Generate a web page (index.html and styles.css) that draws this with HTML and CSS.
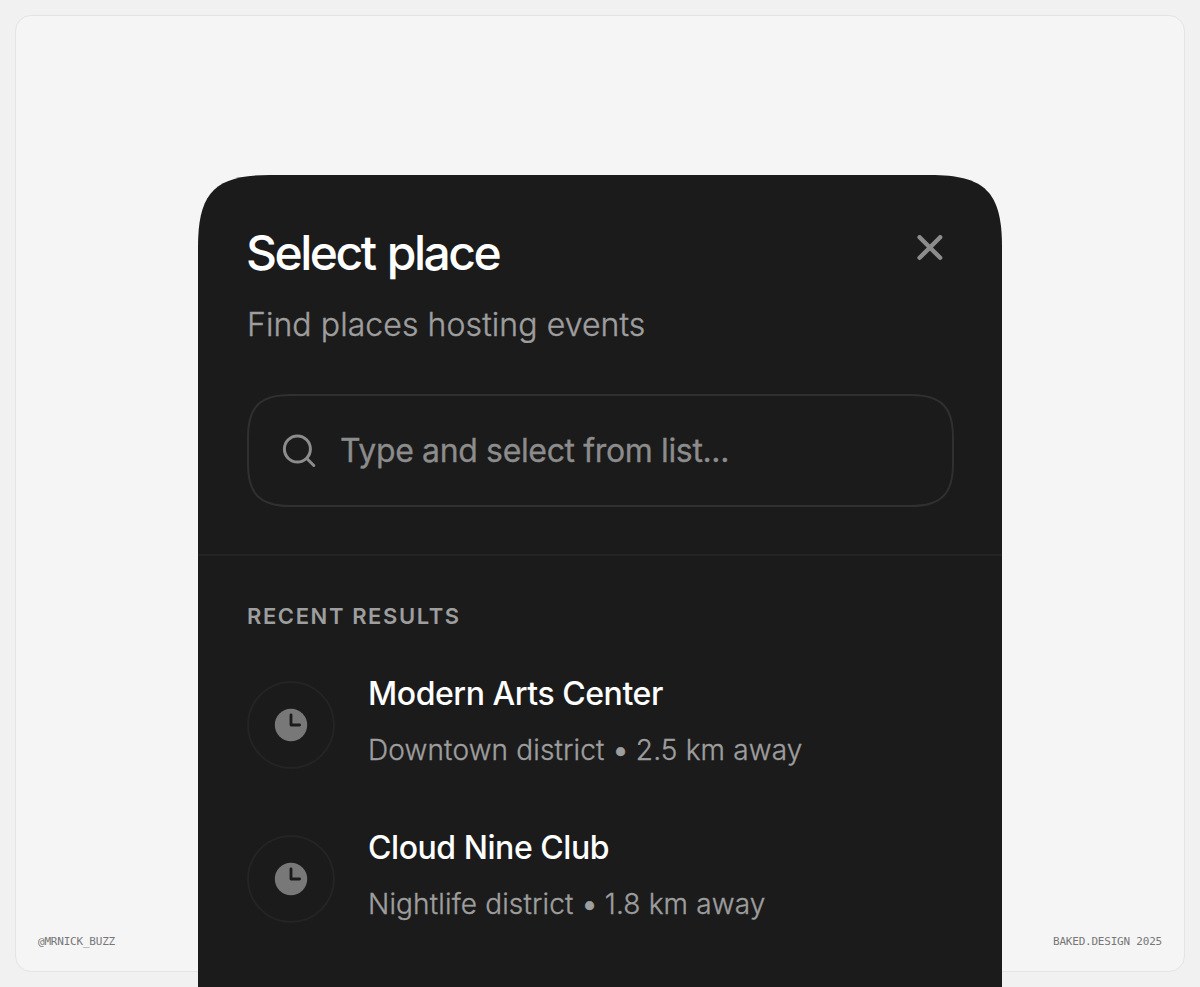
FILE: index.html
```
<!DOCTYPE html>
<html lang="en">
<head>
    <meta charset="utf-8">
    <meta name="viewport" content="width=device-width, initial-scale=1">
    <title>Select place</title>
    <link rel="stylesheet" href="styles.css">
</head>
<body>
    <div class="frame">
        <span class="credit">@MRNICK_BUZZ</span>
        <span class="credit">BAKED.DESIGN 2025</span>
    </div>

    <main class="sheet">
        <header class="sheet-header">
            <div class="sheet-heading">
                <div>
                    <h1>Select place</h1>
                    <p class="subtitle">Find places hosting events</p>
                </div>
                <button class="close" aria-label="Close">
                    <svg width="26" height="26" viewBox="0 0 26 26"><path d="M2.6 2.2l20.6 20.6M23.2 2.2L2.6 22.8"/></svg>
                </button>
            </div>

            <label class="search">
                <svg class="search-outline" width="707" height="113" viewBox="0 0 707 113">
                    <path d="M1 43C1 13 13 1 43 1H664C694 1 706 13 706 43V70C706 100 694 112 664 112H43C13 112 1 100 1 70z"/>
                </svg>
                <svg class="search-icon" width="34" height="34" viewBox="0 0 34 34"><circle cx="15.4" cy="15" r="13"/><path d="M24.8 24.5l7 7"/></svg>
                <input type="text" placeholder="Type and select from list...">
            </label>
        </header>

        <section class="results">
            <h2>RECENT RESULTS</h2>
            <div class="place">
                <div class="place-icon">
                    <svg width="34" height="34" viewBox="0 0 34 34"><circle cx="17" cy="17" r="16.2"/><path d="M17 6.8V17h8.6"/></svg>
                </div>
                <div class="place-text">
                    <h3>Modern Arts Center</h3>
                    <p class="meta">Downtown district <span class="dot">•</span> 2.5 km away</p>
                </div>
            </div>
            <div class="place">
                <div class="place-icon">
                    <svg width="34" height="34" viewBox="0 0 34 34"><circle cx="17" cy="17" r="16.2"/><path d="M17 6.8V17h8.6"/></svg>
                </div>
                <div class="place-text">
                    <h3>Cloud Nine Club</h3>
                    <p class="meta">Nightlife district <span class="dot">•</span> 1.8 km away</p>
                </div>
            </div>
        </section>
    </main>
</body>
</html>
```
FILE: styles.css
```
* { box-sizing: border-box; }
body { margin: 0; height: 987px; overflow: hidden; display: grid; background: #f1f1f1; font-family: Inter, sans-serif; }
h1, h2, h3, p { margin: 0; }
svg { display: block; fill: none; stroke-linecap: round; stroke-linejoin: round; }

/* frame and sheet share one grid cell, the sheet runs off the bottom */
.frame, .sheet { grid-area: 1 / 1; }
.frame { margin: 15px; border: 1px solid #e4e4e4; border-radius: 16px; background: #f5f5f5; display: flex; justify-content: space-between; align-items: flex-end; padding: 0 22px 22px; }
.credit { font: 11px/14px "DejaVu Sans Mono", monospace; letter-spacing: -0.21px; color: #777; }

.sheet {
    width: 804px;
    height: 812px;
    margin: 175px auto 0;
    background: #1b1b1b;
    clip-path: path("M0 72C0 17 17 0 72 0H732C787 0 804 17 804 72V812H0z");
}
.sheet-header { height: 381px; padding: 49px 49px 0; border-bottom: 2px solid #242424; }
.sheet-heading { display: flex; justify-content: space-between; height: 170px; }
h1 { margin-left: -1px; font-size: 48px; line-height: 58px; font-weight: 500; letter-spacing: -2.5px; word-spacing: 2px; color: #fff; }
.subtitle { margin-top: 23px; font-size: 32px; line-height: 40px; font-weight: 300; letter-spacing: 0.08px; color: #9e9e9e; -webkit-text-stroke: 0.4px #9e9e9e; }
.close { align-self: flex-start; margin: 11px 10px 0 0; padding: 0; border: 0; background: none; }
.close svg { stroke: #8c8c8c; stroke-width: 4.4; }

.search { position: relative; display: flex; align-items: center; gap: 24px; width: 707px; height: 113px; padding-left: 35px; }
.search-outline { position: absolute; top: 0; left: 0; stroke: #303030; stroke-width: 2; }
.search-icon { stroke: #8c8c8c; stroke-width: 3; }
.search input { flex: 1; height: 50px; padding: 0; border: 0; outline: 0; background: none; font: 400 32px/50px Inter, sans-serif; letter-spacing: -0.36px; color: #fff; }
.search input::placeholder { color: #8c8c8c; opacity: 1; -webkit-text-stroke: 0.3px #8c8c8c; }

.results { padding: 46px 49px 0; }
h2 { font-size: 22px; line-height: 28px; font-weight: 600; letter-spacing: 1.6px; color: #9e9e9e; }
.place { display: flex; align-items: center; gap: 33px; height: 154px; }
h2 + .place { margin-top: 18px; }
.place-icon { width: 88px; height: 88px; display: flex; align-items: center; justify-content: center; border: 2px solid #242424; border-radius: 50%; }
.place-icon circle { fill: #787878; }
.place-icon path { stroke: #1b1b1b; stroke-width: 2.8; }
.place-text { padding-bottom: 8px; }
h3 { font-size: 32px; line-height: 40px; font-weight: 500; letter-spacing: -0.45px; color: #fff; }
.meta { margin-top: 18px; font-size: 28px; line-height: 36px; font-weight: 300; letter-spacing: 0.15px; color: #9e9e9e; -webkit-text-stroke: 0.35px #9e9e9e; }
.dot { margin-left: 1px; font-weight: 600; }
```
